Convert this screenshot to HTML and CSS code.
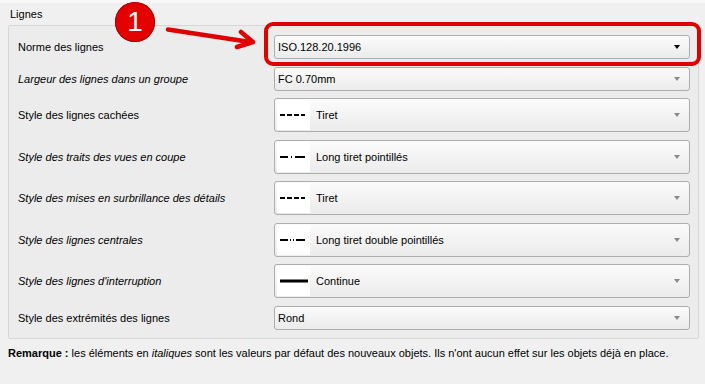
FILE: index.html
```html
<!DOCTYPE html>
<html lang="fr">
<head>
  <meta charset="UTF-8">
  <title>Lignes</title>
  <link rel="stylesheet" href="styles.css">
</head>
<body>

  <div class="panel">
    <div class="group-title">Lignes</div>
    <div class="group">
      <span class="label">Norme des lignes</span>
      <div class="combo active">
        <span class="value">ISO.128.20.1996</span>
        <span class="arrow"></span>
      </div>

      <span class="label default">Largeur des lignes dans un groupe</span>
      <div class="combo">
        <span class="value">FC 0.70mm</span>
        <span class="arrow"></span>
      </div>

      <span class="label">Style des lignes cachées</span>
      <div class="combo tall">
        <span class="swatch">
          <svg width="33" height="30" viewBox="0 0 33 30"><path d="M3 15h5M10 15h5M17 15h5M24 15h4" stroke="#000" stroke-width="2"/></svg>
        </span>
        <span class="value">Tiret</span>
        <span class="arrow"></span>
      </div>

      <span class="label default">Style des traits des vues en coupe</span>
      <div class="combo tall">
        <span class="swatch">
          <svg width="33" height="30" viewBox="0 0 33 30"><path d="M3 15h8M14 15h1M18 15h10" stroke="#000" stroke-width="2"/></svg>
        </span>
        <span class="value">Long tiret pointillés</span>
        <span class="arrow"></span>
      </div>

      <span class="label default">Style des mises en surbrillance des détails</span>
      <div class="combo tall">
        <span class="swatch">
          <svg width="33" height="30" viewBox="0 0 33 30"><path d="M3 15h5M10 15h5M17 15h5M24 15h4" stroke="#000" stroke-width="2"/></svg>
        </span>
        <span class="value">Tiret</span>
        <span class="arrow"></span>
      </div>

      <span class="label default">Style des lignes centrales</span>
      <div class="combo tall">
        <span class="swatch">
          <svg width="33" height="30" viewBox="0 0 33 30"><path d="M3 15h8M13 15h1M16 15h1M19 15h9" stroke="#000" stroke-width="2"/></svg>
        </span>
        <span class="value">Long tiret double pointillés</span>
        <span class="arrow"></span>
      </div>

      <span class="label default">Style des lignes d'interruption</span>
      <div class="combo tall">
        <span class="swatch">
          <svg width="33" height="30" viewBox="0 0 33 30"><path d="M3 15h28" stroke="#000" stroke-width="3"/></svg>
        </span>
        <span class="value">Continue</span>
        <span class="arrow"></span>
      </div>

      <span class="label">Style des extrémités des lignes</span>
      <div class="combo">
        <span class="value">Rond</span>
        <span class="arrow"></span>
      </div>
    </div>

    <p class="note"><b>Remarque :</b> les éléments en <i>italiques</i> sont les valeurs par défaut des nouveaux objets. Ils n'ont aucun effet sur les objets déjà en place.</p>

    <!-- annotation -->
    <div class="mark-box"></div>
    <div class="mark-badge">1</div>
    <svg class="mark-arrow" width="100" height="30" viewBox="0 0 100 30">
      <path d="M8 9.5L90 22" stroke="#e00000" stroke-width="4.5" stroke-linecap="round"/>
      <path d="M81 12L93 22L77 27" fill="none" stroke="#e00000" stroke-width="4.5" stroke-linecap="round" stroke-linejoin="round"/>
    </svg>
  </div>

</body>
</html>
```

FILE: styles.css
```css
body {
  margin: 0;
  background: #f0f0f0;
  font-family: "Liberation Sans", Arial, sans-serif;
  font-size: 11px;
  color: #000;
}

.panel {
  position: relative;
  border-top: 3px solid #f8f8f8;
  padding: 4px 6px 0 8px;
  height: 377px;
}

.group-title {
  line-height: 14px;
  padding-left: 2px;
  margin-bottom: 4px;
}

.group {
  display: grid;
  grid-template-columns: 1fr 416px;
  row-gap: 7.5px;
  align-items: center;
  padding: 9px 8px 8px 9px;
  border: 1px solid #d6d6d6;
  border-radius: 2px;
  background: #ececec;
}

.label.default {
  font-style: italic;
}

.combo {
  position: relative;
  display: flex;
  align-items: center;
  height: 24px;
  box-sizing: border-box;
  padding-left: 3px;
  border: 1px solid #adadad;
  border-radius: 3px;
  background: linear-gradient(#fbfbfb, #ebebeb);
}

.combo.tall {
  height: 34px;
  padding-left: 2px;
}

.swatch {
  display: flex;
  width: 33px;
  height: 30px;
  margin-right: 6px;
  background: #fff;
}

.arrow {
  position: absolute;
  right: 9px;
  top: 50%;
  margin-top: -2px;
  border-left: 3.5px solid transparent;
  border-right: 3.5px solid transparent;
  border-top: 4px solid #8a8a8a;
}

.combo.active .arrow {
  border-top-color: #000;
}

.note {
  margin: 7px 0 0;
  line-height: 14px;
}

.mark-box {
  position: absolute;
  left: 264px;
  top: 19px;
  width: 437px;
  height: 44px;
  box-sizing: border-box;
  border: 4px solid #e00000;
  border-radius: 9px;
}

.mark-badge {
  position: absolute;
  left: 115px;
  top: -1px;
  width: 40px;
  height: 40px;
  border-radius: 50%;
  background: #e30000;
  box-shadow: inset 0 0 0 1px #b00000;
  color: #fff;
  font-size: 28px;
  line-height: 40px;
  text-align: center;
}

.mark-arrow {
  position: absolute;
  left: 160px;
  top: 17px;
}
```
